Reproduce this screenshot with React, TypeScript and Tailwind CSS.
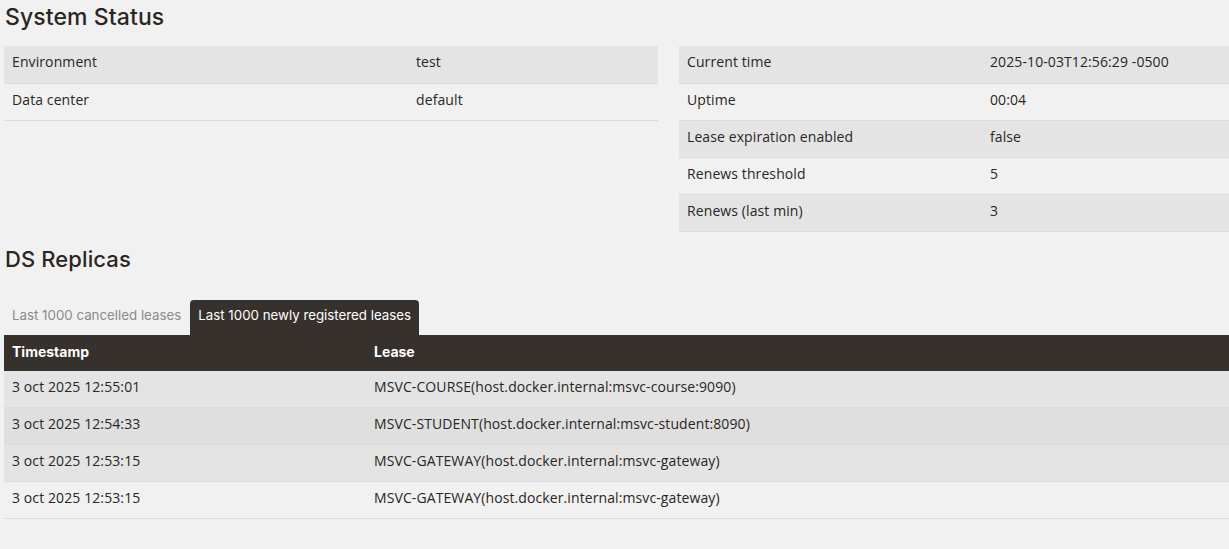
import React from 'react';

const general = [
    ['Environment', 'test'],
    ['Data center', 'default'],
];

const status = [
    ['Current time', '2025-10-03T12:56:29 -0500'],
    ['Uptime', '00:04'],
    ['Lease expiration enabled', 'false'],
    ['Renews threshold', '5'],
    ['Renews (last min)', '3'],
];

const leases = [
    ['3 oct 2025 12:55:01', 'MSVC-COURSE(host.docker.internal:msvc-course:9090)'],
    ['3 oct 2025 12:54:33', 'MSVC-STUDENT(host.docker.internal:msvc-student:8090)'],
    ['3 oct 2025 12:53:15', 'MSVC-GATEWAY(host.docker.internal:msvc-gateway)'],
    ['3 oct 2025 12:53:15', 'MSVC-GATEWAY(host.docker.internal:msvc-gateway)'],
];

const headingFont = { fontFamily: 'Inter, "Noto Sans", sans-serif' };

function KeyValueTable({ rows, firstCol }: { rows: string[][]; firstCol: string }) {
    return (
        <table className="w-full border-collapse">
            <tbody>
                {rows.map((row, i) => (
                    <tr
                        key={row[0]}
                        className={i % 2 === 0 ? 'bg-[#e4e4e4]' : 'bg-[#f1f1f1]'}
                    >
                        <td className={`${firstCol} h-[37px] px-2 pt-0 pb-[5px] border-b border-[#dcdce0] align-middle`}>
                            {row[0]}
                        </td>
                        <td className="h-[37px] px-2 pt-0 pb-[5px] border-b border-[#dcdce0] align-middle">
                            {row[1]}
                        </td>
                    </tr>
                ))}
            </tbody>
        </table>
    );
}

export default function App() {
    return (
        <div
            className="min-h-screen bg-[#f1f1f1] text-[#2a2624] text-[14px] tracking-[0.1px] overflow-hidden"
            style={{ fontFamily: '"Open Sans", sans-serif' }}
        >
            <div className="pl-[4px]">
                {/* System status */}
                <h2 className="text-[23px] leading-[34px] pl-[1px] font-medium text-[#2a2624]" style={headingFont}>
                    System Status
                </h2>
                <div className="flex items-start gap-[21px] mt-[12px]">
                    <div className="w-[654px] shrink-0">
                        <KeyValueTable rows={general} firstCol="w-[404px]" />
                    </div>
                    <div className="flex-1">
                        <KeyValueTable rows={status} firstCol="w-[303px]" />
                    </div>
                </div>

                {/* DS Replicas */}
                <h2 className="text-[22px] leading-[34px] pl-[1px] mt-[10px] font-medium text-[#2a2624]" style={headingFont}>
                    DS Replicas
                </h2>
                <div className="flex items-end mt-[24px] text-[13.3px] tracking-normal" style={headingFont}>
                    <div className="h-[35px] px-2 pb-[2px] flex items-center text-[#8a8a8a]">
                        Last 1000 cancelled leases
                    </div>
                    <div className="h-[35px] ml-[1px] px-2 pb-[2px] flex items-center bg-[#37312e] text-white rounded-t-[4px]">
                        Last 1000 newly registered leases
                    </div>
                </div>
                <table className="w-full border-collapse">
                    <thead>
                        <tr className="bg-[#37312e] text-white">
                            <th className="w-[362px] h-[36px] px-2 pb-[3px] text-left font-bold tracking-normal" style={headingFont}>Timestamp</th>
                            <th className="h-[36px] px-2 pb-[3px] text-left font-bold tracking-normal" style={headingFont}>Lease</th>
                        </tr>
                    </thead>
                    <tbody>
                        {leases.map((row, i) => (
                            <tr
                                key={i}
                                className={
                                    i === 1
                                        ? 'bg-[#dfdfdf]'
                                        : i % 2 === 0
                                          ? 'bg-[#e4e4e4]'
                                          : 'bg-[#f1f1f1]'
                                }
                            >
                                <td className="h-[37px] px-2 pb-[5px] border-b border-[#dcdce0]">{row[0]}</td>
                                <td className="h-[37px] px-2 pb-[5px] border-b border-[#dcdce0]">{row[1]}</td>
                            </tr>
                        ))}
                    </tbody>
                </table>
            </div>
        </div>
    );
}
